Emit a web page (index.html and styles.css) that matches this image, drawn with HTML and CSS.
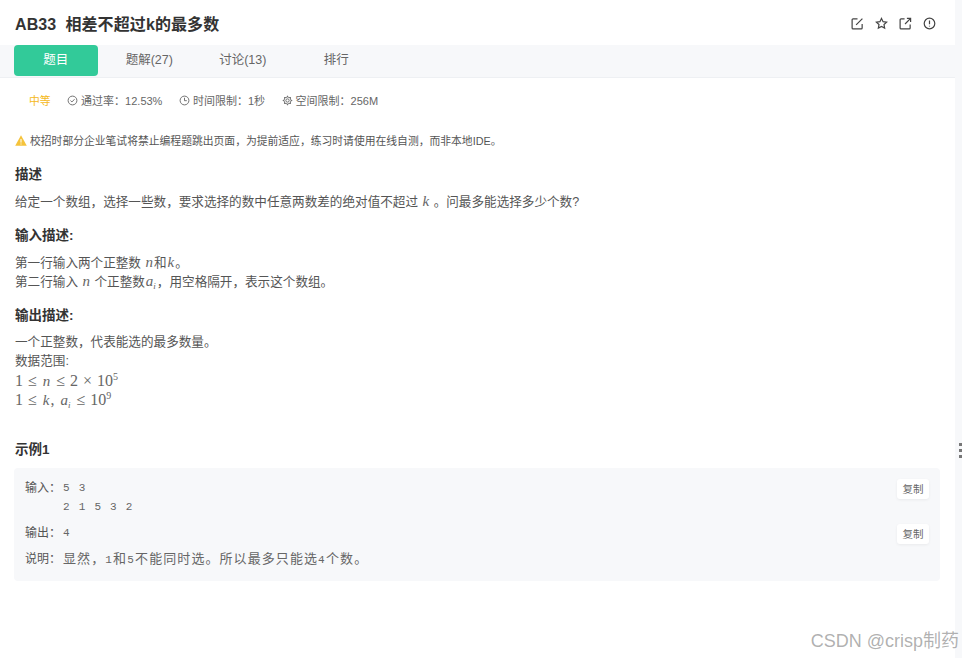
FILE: index.html
```html
<!DOCTYPE html>
<html lang="zh-CN">
<head>
<meta charset="utf-8">
<title>AB33 相差不超过k的最多数</title>
<link rel="stylesheet" href="styles.css">
</head>
<body>
<main class="panel">
  <header class="head">
    <h1 class="title">AB33&nbsp; 相差不超过k的最多数</h1>
    <div class="head-icons">
      <svg class="hi" viewBox="0 0 14 14"><path d="M7 2H2.200a1 1 0 0 0-1 1v8.800a1 1 0 0 0 1 1H11a1 1 0 0 0 1-1V7.500M5.500 8.500 12.300 1.700"/></svg>
      <svg class="hi" viewBox="0 0 14 14"><path d="M7 1.500 8.700 5l3.800.5-2.800 2.600.7 3.900L7 10.200 3.600 12l.7-3.900L1.500 5.500 5.300 5Z"/></svg>
      <svg class="hi" viewBox="0 0 14 14"><path d="M6 2H2.200a1 1 0 0 0-1 1v8.800a1 1 0 0 0 1 1H11a1 1 0 0 0 1-1V8M6.500 7.500 12.500 1.500M8.500 1.500h4v4"/></svg>
      <svg class="hi" viewBox="0 0 14 14"><circle cx="7" cy="7" r="5.700"/><path d="M7 3.800v4M7 9.300v1"/></svg>
    </div>
  </header>
  <nav class="tabs">
    <a class="tab active">题目</a>
    <a class="tab">题解(27)</a>
    <a class="tab">讨论(13)</a>
    <a class="tab">排行</a>
  </nav>
  <div class="meta">
    <span class="level">中等</span>
    <span class="mi"><svg class="mic" viewBox="0 0 12 12"><circle cx="6" cy="6" r="4.800"/><path d="M3.800 6.100 5.400 7.600 8.200 4.600"/></svg>通过率：12.53%</span>
    <span class="mi"><svg class="mic" viewBox="0 0 12 12"><circle cx="6" cy="6" r="4.800"/><path d="M6 3v3.200h2.500"/></svg>时间限制：1秒</span>
    <span class="mi"><svg class="mic" viewBox="0 0 12 12"><circle cx="6" cy="6" r="3.900"/><circle cx="6" cy="6" r="1.800"/><path d="M6 .8v1.300M6 9.900v1.300M.8 6h1.300M9.900 6h1.300M2.300 2.300l1 1M8.700 8.700l1 1M9.700 2.300l-1 1M3.300 8.700l-1 1"/></svg>空间限制：256M</span>
  </div>
  <p class="notice">
    <svg class="warn" viewBox="0 0 12 11"><path d="M6 .3 11.800 10.700H.2Z"/><path class="warn-mark" d="M6 4v3.600M6 8.500v1"/></svg>校招时部分企业笔试将禁止编程题跳出页面，为提前适应，练习时请使用在线自测，而非本地IDE。
  </p>

  <section class="sec sec-desc">
    <h2 class="sec-title">描述</h2>
    <p class="txt">给定一个数组，选择一些数，要求选择的数中任意两数差的绝对值不超过 <i class="m">k</i> 。问最多能选择多少个数?</p>
  </section>
  <section class="sec sec-in">
    <h2 class="sec-title">输入描述:</h2>
    <p class="txt">第一行输入两个正整数 <i class="m">n</i>和<i class="m">k</i>。<br>第二行输入 <i class="m">n</i> 个正整数<i class="m">a<sub class="sb">i</sub></i>，用空格隔开，表示这个数组。</p>
  </section>
  <section class="sec sec-out">
    <h2 class="sec-title">输出描述:</h2>
    <div class="txt txt-out">一个正整数，代表能选的最多数量。<br>数据范围:
      <span class="eq eq-first"><span class="m0">1 ≤ </span><i class="m">n</i><span class="m0"> ≤ 2 × 10<sup class="sp">5</sup></span></span>
      <span class="eq"><span class="m0">1 ≤ </span><i class="m">k</i><span class="m0">, </span><i class="m">a<sub class="sb">i</sub></i><span class="m0"> ≤ 10<sup class="sp">9</sup></span></span>
    </div>
  </section>

  <section class="example">
    <h2 class="sec-title">示例1</h2>
    <div class="ex-box">
      <div class="ex-row">
        <span class="ex-label">输入：</span>
        <pre class="ex-code">5 3
2 1 5 3 2</pre>
        <button class="copy">复制</button>
      </div>
      <div class="ex-row ex-out">
        <span class="ex-label">输出：</span>
        <pre class="ex-code">4</pre>
        <button class="copy">复制</button>
      </div>
      <div class="ex-row ex-exp">
        <span class="ex-label">说明：</span>
        <pre class="ex-code ex-note">显然，<span class="dg">1</span>和<span class="dg">5</span>不能同时选。所以最多只能选<span class="dg">4</span>个数。</pre>
      </div>
    </div>
  </section>
</main>
<div class="side-dots"><i></i><i></i><i></i></div>
<div class="watermark">CSDN @crisp制药</div>
</body>
</html>
```
FILE: styles.css
```css
* { box-sizing: border-box; }
html, body { margin: 0; padding: 0; height: 100%; overflow: hidden; }
body {
  background: #f7f8fa;
  font-family: "Liberation Sans", "Noto Sans CJK SC", sans-serif;
  color: #555;
}
.panel { width: 955px; height: 658px; background: #fff; }
.head {
  height: 45px;
  padding: 1px 19px 0 15px;
  display: flex;
  align-items: center;
  justify-content: space-between;
}
.title { margin: 0; font-size: 16px; font-weight: 700; color: #333; letter-spacing: .1px; }
.head-icons { display: flex; gap: 11px; align-items: center; }
.hi { width: 13px; height: 13px; fill: none; stroke: #444; stroke-width: 1.3; }
.tabs {
  height: 33px;
  background: #f7f8fa;
  border-bottom: 1px solid #eef0f3;
  padding-left: 14px;
  display: flex;
  gap: 10px;
}
.tab {
  width: 83.500px;
  height: 31px;
  line-height: 30px;
  text-align: center;
  font-size: 12.500px;
  color: #666;
  border-radius: 4px;
}
.tab.active { background: #32ca99; color: #fff; }
.meta {
  display: flex;
  align-items: center;
  height: 16px;
  margin-top: 14px;
  padding-left: 29px;
  font-size: 11px;
  color: #666;
  gap: 16.500px;
}
.level { color: #f5b921; font-size: 10.800px; }
.mi { display: inline-flex; align-items: center; gap: 3px; }
.mic { width: 11px; height: 11px; fill: none; stroke: #666; stroke-width: 1; }
.notice {
  margin: 24px 0 0;
  height: 16px;
  padding-left: 15px;
  display: flex;
  align-items: center;
  font-size: 10.800px;
  color: #555;
}
.warn { width: 12px; height: 11px; margin-right: 3px; fill: #f5c33b; }
.warn-mark { fill: none; stroke: #fff; stroke-width: 1; }
.sec { padding-left: 15px; }
.sec-title { margin: 0; font-size: 13.500px; line-height: 18px; font-weight: 700; color: #333; }
.txt { margin: 9px 0 0; font-size: 12.600px; line-height: 19.500px; color: #555; }
.txt-out { margin-top: 8px; }
.sec-desc { margin-top: 18px; }
.sec-in { margin-top: 14px; }
.sec-out { margin-top: 14px; }
.m { font-family: "Liberation Serif", serif; font-size: 15px; font-style: italic; padding: 0 1px; line-height: 0; color: #666; }
.m0 { font-family: "Liberation Serif", serif; font-size: 16px; word-spacing: 1px; line-height: 0; color: #666; }
.eq { display: block; height: 19.500px; }
.eq-first { margin-top: 1px; }
.sb { font-size: 9px; line-height: 0; vertical-align: -3px; }
.sp { font-size: 10px; line-height: 0; vertical-align: 6px; }
.example { margin-top: 29px; padding-left: 15px; }
.ex-box {
  width: 926px;
  height: 113px;
  margin: 9px 0 0 -1px;
  padding: 11px 11px;
  background: #f7f8fa;
  border-radius: 4px;
  font-size: 12px;
}
.ex-row { display: flex; align-items: flex-start; }
.ex-label { width: 38px; line-height: 19px; color: #555; }
.ex-code {
  margin: 0;
  font-family: "Liberation Mono", "Noto Sans CJK SC", monospace;
  font-size: 11px;
  line-height: 19px;
  letter-spacing: 1.250px;
  color: #666;
  flex: 1;
}
.ex-note { font-size: 13px; letter-spacing: 1.080px; }
.dg { font-size: 11px; letter-spacing: 1.250px; }
.ex-out { margin-top: 7px; }
.ex-exp { margin-top: 6px; }
.copy {
  width: 32px;
  height: 20px;
  margin: 0;
  padding: 0;
  border: 0;
  border-radius: 3px;
  background: #fff;
  box-shadow: 0 1px 3px rgba(0, 0, 0, .06);
  font: 10.500px "Liberation Sans", "Noto Sans CJK SC", sans-serif;
  color: #666;
}
.side-dots {
  position: absolute;
  left: 959px;
  top: 443px;
  display: grid;
  grid-template-columns: 3px;
  gap: 3px;
}
.side-dots i { width: 3px; height: 3px; background: #777; }
.watermark {
  position: absolute;
  right: 3px;
  top: 631px;
  font-size: 18px;
  line-height: 20px;
  color: rgba(110, 110, 110, .55);
}
```
